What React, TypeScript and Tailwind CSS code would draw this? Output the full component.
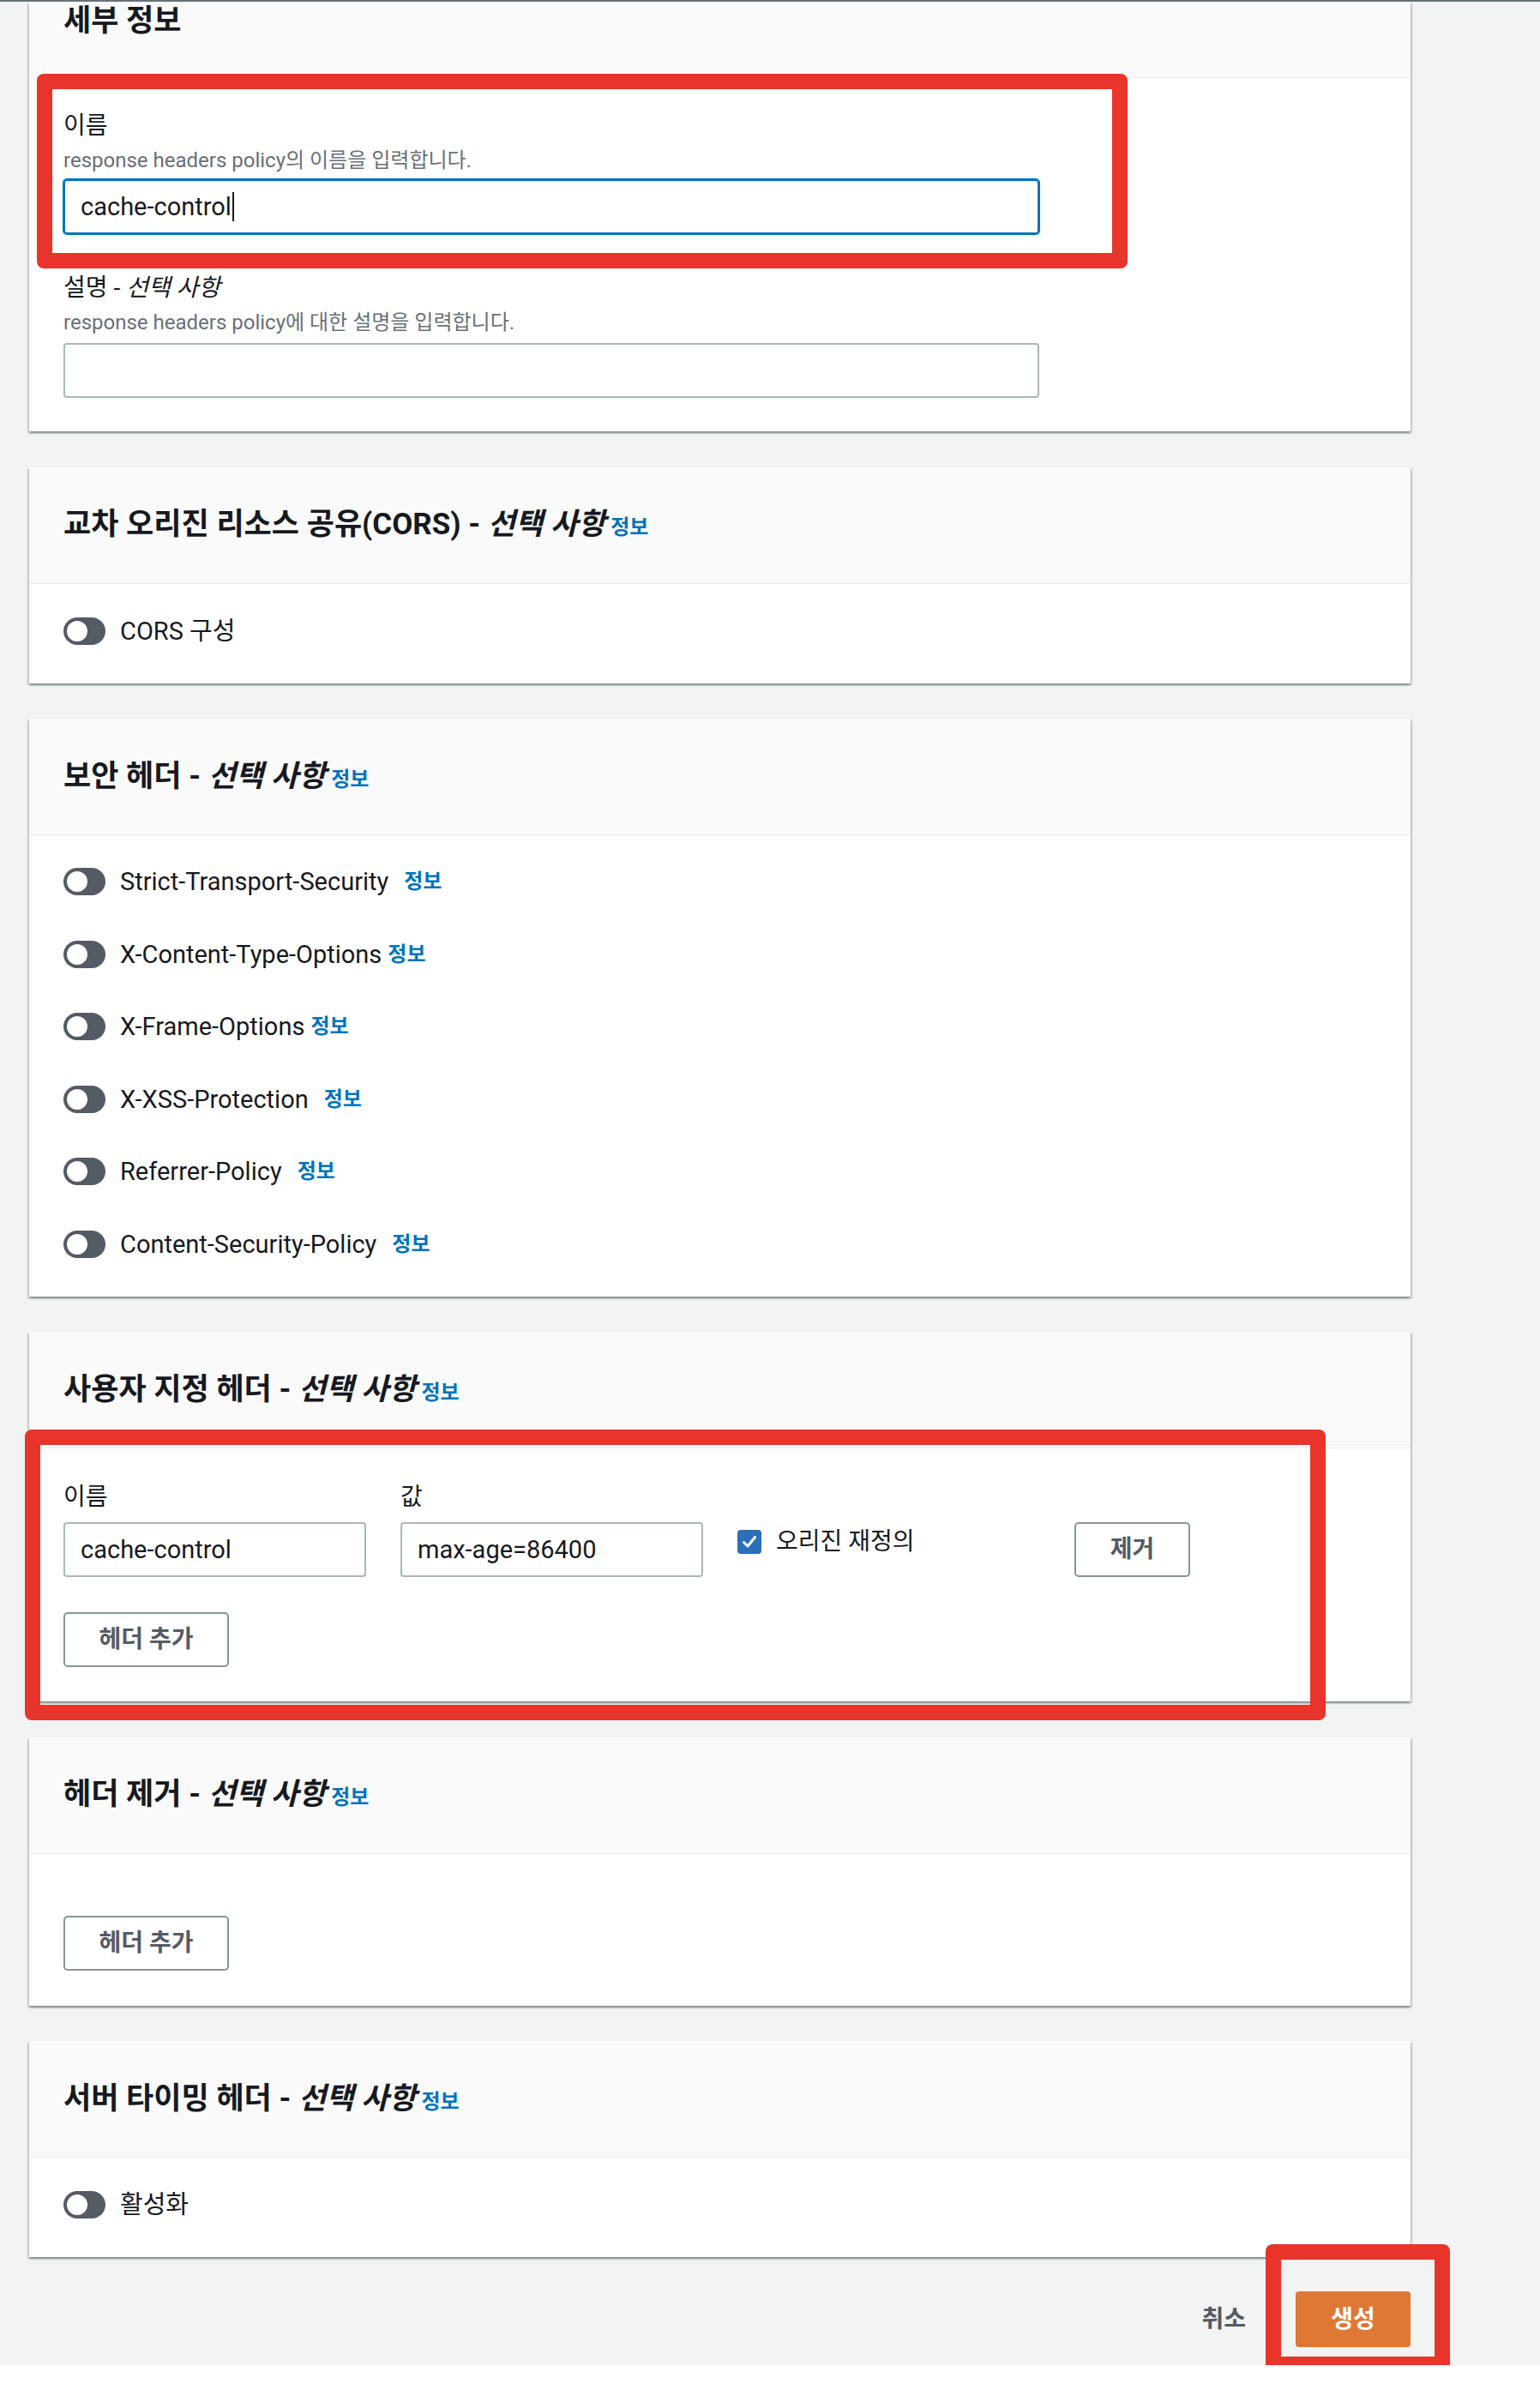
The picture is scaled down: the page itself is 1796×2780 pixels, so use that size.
import React from "react";

const FONT = 'Roboto, "Noto Sans CJK KR", sans-serif';

function Info({ className = "" }: { className?: string }) {
  return (
    <span className={"text-[24px] font-bold text-[#0073bb] leading-none " + className}>정보</span>
  );
}

function Toggle() {
  return (
    <div className="relative w-[49px] h-[32px] rounded-full bg-[#545b64] shrink-0">
      <div className="absolute left-[4px] top-[4px] w-[24px] h-[24px] rounded-full bg-white" />
    </div>
  );
}

function CardHeader({ children }: { children: React.ReactNode }) {
  return (
    <div className="h-[136px] bg-[#fafafa] border-b border-[#eaeded] flex items-center px-[40px]">
      <div className="flex items-baseline">{children}</div>
    </div>
  );
}

function Title({ main, opt = true }: { main: string; opt?: boolean }) {
  return (
    <>
      <h2 className="text-[35px] font-bold leading-[46px] text-[#16191f]">
        {main}
        {opt && (
          <>
            {" - "}
            <i>선택 사항</i>
          </>
        )}
      </h2>
      <Info className="ml-[6px]" />
    </>
  );
}

function Card({ children }: { children: React.ReactNode }) {
  return (
    <div className="w-[1611px] bg-white shadow-[0_2px_2px_0_rgba(0,28,36,0.3),2px_2px_2px_0_rgba(0,28,36,0.15),-2px_2px_2px_0_rgba(0,28,36,0.15)]">
      {children}
    </div>
  );
}

function ToggleRow({ label, info, wide }: { label: string; info?: boolean; wide?: boolean }) {
  return (
    <div className="h-[40px] flex items-center">
      <Toggle />
      <span className="ml-[17px] text-[29px] text-[#16191f] leading-[40px]">{label}</span>
      {info && <Info className={wide ? "ml-[18px]" : "ml-[7px]"} />}
    </div>
  );
}

function OutlineButton({ label, w }: { label: string; w: string }) {
  return (
    <button
      className={
        "h-[64px] border-2 border-[#879596] rounded-[5px] bg-white text-[28px] font-bold text-[#545b64] flex items-center justify-center " +
        w
      }
    >
      {label}
    </button>
  );
}

export default function App() {
  const security: [string, boolean][] = [
    ["Strict-Transport-Security", true],
    ["X-Content-Type-Options", false],
    ["X-Frame-Options", false],
    ["X-XSS-Protection", true],
    ["Referrer-Policy", true],
    ["Content-Security-Policy", true],
  ];
  return (
    <div className="relative w-[1796px]" style={{ fontFamily: FONT }}>
      <div className="bg-[#f2f3f3] pb-[21px]">
        <div className="h-[2px] bg-[#687078]" />
        <div className="pl-[34px] flex flex-col gap-[41.5px]">
          {/* Card 1 */}
          <Card>
            <div className="h-[89px] bg-[#fafafa] border-b border-[#eaeded] px-[40px] pt-[1px]">
              <h2 className="text-[35px] font-bold leading-[44px] text-[#16191f]">세부 정보</h2>
            </div>
            <div className="px-[40px] pt-[36px] pb-[39px]">
              <div className="text-[28px] leading-[40px] text-[#16191f]">이름</div>
              <div className="mt-[3px] text-[24px] leading-[34px] text-[#687078]">
                response headers policy의 이름을 입력합니다.
              </div>
              <div className="mt-[5px] w-[1138px] h-[64px] border-2 border-[#0073bb] rounded-[4px] shadow-[0_0_0_1px_#0073bb] flex items-center px-[18px]">
                <span className="text-[29px] text-[#16191f] leading-none">cache-control</span>
                <span className="w-[2px] h-[34px] bg-[#16191f] ml-[1px]" />
              </div>
              <div className="mt-[43px] text-[28px] leading-[40px] text-[#16191f]">
                설명 - <i>선택 사항</i>
              </div>
              <div className="mt-[3px] text-[24px] leading-[34px] text-[#687078]">
                response headers policy에 대한 설명을 입력합니다.
              </div>
              <div className="mt-[7px] w-[1138px] h-[64px] border-2 border-[#aab7b8] rounded-[4px] bg-white" />
            </div>
          </Card>

          {/* Card 2 */}
          <Card>
            <CardHeader>
              <Title main="교차 오리진 리소스 공유(CORS)" />
            </CardHeader>
            <div className="px-[40px] pt-[35px] pb-[41px]">
              <ToggleRow label="CORS 구성" />
            </div>
          </Card>

          {/* Card 3 */}
          <Card>
            <CardHeader>
              <Title main="보안 헤더" />
            </CardHeader>
            <div className="px-[40px] pt-[34px] pb-[41px] flex flex-col gap-[44.6px]">
              {security.map(([l, w]) => (
                <ToggleRow key={l} label={l} info wide={w} />
              ))}
            </div>
          </Card>

          {/* Card 4 */}
          <Card>
            <CardHeader>
              <Title main="사용자 지정 헤더" />
            </CardHeader>
            <div className="px-[40px] pt-[37px] pb-[40px]">
              <div className="flex">
                <div className="w-[353px]">
                  <div className="text-[28px] leading-[40px] text-[#16191f]">이름</div>
                  <div className="mt-[9px] h-[64px] border-2 border-[#aab7b8] rounded-[4px] flex items-center px-[18px] text-[29px] text-[#16191f]">
                    cache-control
                  </div>
                </div>
                <div className="w-[353px] ml-[40px]">
                  <div className="text-[28px] leading-[40px] text-[#16191f]">값</div>
                  <div className="mt-[9px] h-[64px] border-2 border-[#aab7b8] rounded-[4px] flex items-center px-[18px] text-[29px] text-[#16191f]">
                    max-age=86400
                  </div>
                </div>
                <div className="w-[393px] ml-[40px] pt-[52px]">
                  <div className="h-[40px] flex items-center">
                    <div className="w-[28px] h-[28px] rounded-[4px] bg-[#2b6fb8] flex items-center justify-center">
                      <svg width="20" height="20" viewBox="0 0 20 20">
                        <polyline
                          points="3.5,10.5 8,15 16.5,4.5"
                          fill="none"
                          stroke="white"
                          strokeWidth="3"
                          strokeLinecap="round"
                          strokeLinejoin="round"
                        />
                      </svg>
                    </div>
                    <span className="ml-[17px] text-[28px] text-[#16191f]">오리진 재정의</span>
                  </div>
                </div>
                <div className="pt-[49px]">
                  <OutlineButton label="제거" w="w-[135px]" />
                </div>
              </div>
              <div className="mt-[41px]">
                <OutlineButton label="헤더 추가" w="w-[193px]" />
              </div>
            </div>
          </Card>

          {/* Card 5 */}
          <Card>
            <CardHeader>
              <Title main="헤더 제거" />
            </CardHeader>
            <div className="px-[40px] pt-[72px] pb-[41px]">
              <OutlineButton label="헤더 추가" w="w-[193px]" />
            </div>
          </Card>

          {/* Card 6 */}
          <Card>
            <CardHeader>
              <Title main="서버 타이밍 헤더" />
            </CardHeader>
            <div className="px-[40px] pt-[35px] pb-[41px]">
              <ToggleRow label="활성화" />
            </div>
          </Card>
        </div>

        {/* Footer */}
        <div className="mt-[40px] pr-[151px] flex justify-end items-center">
          <button className="text-[28px] font-bold text-[#545b64] mr-[58px]">취소</button>
          <button className="w-[134px] h-[65px] rounded-[4px] bg-[#de7834] text-[28px] font-bold text-white">
            생성
          </button>
        </div>
      </div>

      {/* Annotation boxes */}
      <div className="absolute left-[43px] top-[86px] w-[1272px] h-[227px] border-[18px] border-[#e8342a] rounded-[8px] pointer-events-none" />
      <div className="absolute left-[29px] top-[1667px] w-[1517px] h-[339px] border-[18px] border-[#e8342a] rounded-[8px] pointer-events-none" />
      <div className="absolute left-[1476px] top-[2617px] w-[215px] h-[149px] border-[18px] border-[#e8342a] rounded-[8px] pointer-events-none" />
    </div>
  );
}
